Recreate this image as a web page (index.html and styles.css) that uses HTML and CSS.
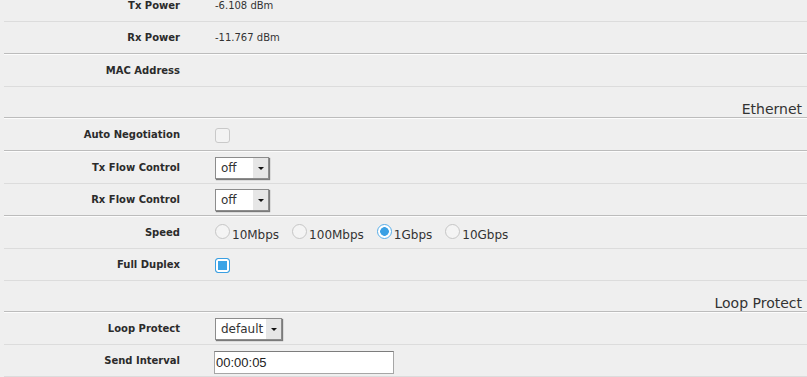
FILE: index.html
```html
<!DOCTYPE html>
<html lang="en">
<head>
    <meta charset="UTF-8">
    <title>SFP Port</title>
    <link rel="stylesheet" href="styles.css">
</head>
<body>
    <div class="form">
        <div class="row">
            <div class="lbl">Tx Power</div>
            <div class="val">-6.108 dBm</div>
        </div>
        <div class="row end">
            <div class="lbl">Rx Power</div>
            <div class="val">-11.767 dBm</div>
        </div>
        <div class="row">
            <div class="lbl">MAC Address</div>
            <div class="val"></div>
        </div>

        <div class="head end">Ethernet</div>

        <div class="row end">
            <div class="lbl">Auto Negotiation</div>
            <div class="val"><input type="checkbox" class="chk"></div>
        </div>
        <div class="row">
            <div class="lbl">Tx Flow Control</div>
            <div class="val">
                <div class="sel"><span class="sel-text">off</span><span class="sel-btn"><i class="arrow"></i></span></div>
            </div>
        </div>
        <div class="row end">
            <div class="lbl">Rx Flow Control</div>
            <div class="val">
                <div class="sel"><span class="sel-text">off</span><span class="sel-btn"><i class="arrow"></i></span></div>
            </div>
        </div>
        <div class="row">
            <div class="lbl">Speed</div>
            <div class="val opts">
                <label class="opt"><input type="radio" name="speed">10Mbps</label>
                <label class="opt"><input type="radio" name="speed">100Mbps</label>
                <label class="opt"><input type="radio" name="speed" checked>1Gbps</label>
                <label class="opt"><input type="radio" name="speed">10Gbps</label>
            </div>
        </div>
        <div class="row">
            <div class="lbl">Full Duplex</div>
            <div class="val"><input type="checkbox" class="chk" checked></div>
        </div>

        <div class="head end">Loop Protect</div>

        <div class="row">
            <div class="lbl">Loop Protect</div>
            <div class="val">
                <div class="sel wide"><span class="sel-text">default</span><span class="sel-btn"><i class="arrow"></i></span></div>
            </div>
        </div>
        <div class="row">
            <div class="lbl">Send Interval</div>
            <div class="val"><input type="text" class="txt" value="00:00:05"></div>
        </div>
    </div>
</body>
</html>
```

FILE: styles.css
```css
body {
    margin: 0;
    background-color: #efefef;
    color: #333;
    font-family: "DejaVu Sans", Verdana, sans-serif;
    font-size: 10px;
    overflow: hidden;
}
.form {
    margin: -10px 0 0 4px;
}
.row {
    display: flex;
    align-items: center;
    height: 31px;
    border-bottom: 1px solid #dcdcdc;
}
.end {
    border-bottom-color: #bcbcbc;
    box-shadow: 0 1px 0 #fcfcfc;
    margin-bottom: 1px;
}
.lbl {
    width: 176px;
    flex-shrink: 0;
    text-align: right;
    font-weight: bold;
    color: #2b2b2b;
}
.val {
    margin-left: 35px;
    display: flex;
    align-items: center;
}
.head {
    display: flex;
    justify-content: flex-end;
    align-items: flex-end;
    height: 30px;
    padding-right: 5px;
    font-size: 14px;
    border-bottom: 1px solid #bcbcbc;
}
.chk {
    appearance: none;
    -webkit-appearance: none;
    width: 15px;
    height: 15px;
    margin: 2px 0 0 0;
    border: 1px solid #c9c9c9;
    border-radius: 3px;
    background-color: #f3f3f3;
    box-sizing: border-box;
}
.chk:checked {
    border-color: #3a9fe2;
    background-color: #3aa3e6;
    box-shadow: inset 0 0 0 2px #fff;
}
.opts {
    gap: 13px;
    font-size: 12px;
}
.opt {
    display: flex;
    align-items: baseline;
}
.opt input {
    appearance: none;
    -webkit-appearance: none;
    width: 15px;
    height: 15px;
    margin: 0 2px 0 0;
    border: 1px solid #c6c6c6;
    border-radius: 50%;
    background-color: #f4f4f4;
    box-sizing: border-box;
}
.opt input:checked {
    border-color: #58aee9;
    background: radial-gradient(circle, #3aa0e4 0, #3aa0e4 4px, #fff 4.6px);
}
.sel {
    display: flex;
    width: 54px;
    height: 22px;
    box-sizing: border-box;
    border: 1px solid #8c8c8c;
    background-color: #fff;
    box-shadow: 1px 1px 1px #7a7a7a;
    font-size: 12px;
    margin-top: 1px;
}
.sel.wide {
    width: 67px;
}
.sel-text {
    flex: 1;
    padding-left: 5px;
    line-height: 20px;
}
.sel-btn {
    width: 15px;
    background-color: #e6e6e6;
    display: flex;
    align-items: center;
    justify-content: center;
}
.arrow {
    width: 0;
    height: 0;
    border-left: 3px solid transparent;
    border-right: 3px solid transparent;
    border-top: 3px solid #111;
}
.txt {
    width: 180px;
    height: 23px;
    box-sizing: border-box;
    margin: 3px 0 0 -1px;
    padding: 0 1px;
    border: 1px solid #a6a6a6;
    border-top-color: #7d7d7d;
    font-family: "Liberation Sans", Arial, sans-serif;
    font-size: 13px;
    color: #222;
    outline: none;
}
```
